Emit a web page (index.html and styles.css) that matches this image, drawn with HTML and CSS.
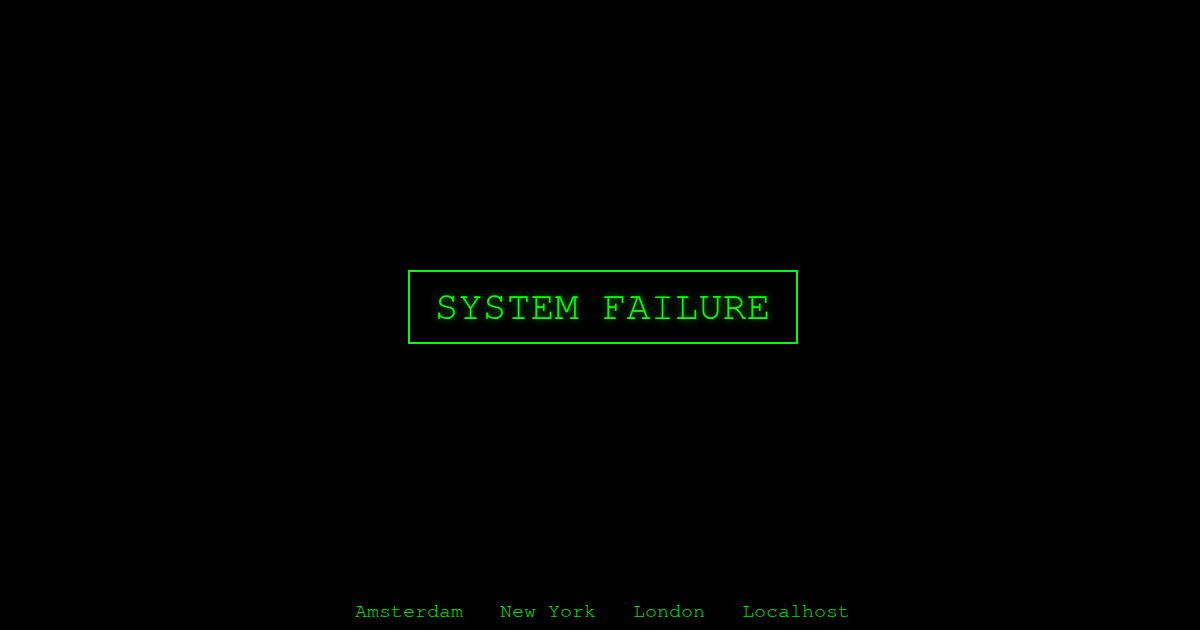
FILE: index.html
```html
<!DOCTYPE html>
<html>
<head>
<meta charset="utf-8">
<link rel="stylesheet" href="styles.css">
</head>
<body>
<main class="stage">
  <div class="failure">SYSTEM FAILURE</div>
</main>
<footer class="nodes">
  <span>Amsterdam</span>
  <span>New York</span>
  <span>London</span>
  <span>Localhost</span>
</footer>
</body>
</html>
```
FILE: styles.css
```css
html, body {
  margin: 0;
  padding: 0;
  background: #000;
  height: 100%;
}
body {
  display: flex;
  flex-direction: column;
  font-family: FreeMono, "TeX Gyre Cursor", "Liberation Mono", monospace;
  color: #00dd00;
}
.stage {
  flex: 1;
  display: flex;
  align-items: center;
  justify-content: center;
  padding-top: 14px;
}
.failure {
  border: 2px solid #00ff00;
  padding: 14px 25px 14px 25px;
  margin-left: 5px;
  font-size: 40px;
  line-height: 42px;
  color: #00ff00;
  text-shadow: 0 0 8px rgba(0, 255, 0, 0.55);
}
.nodes {
  display: flex;
  justify-content: center;
  gap: 37px;
  font-size: 20px;
  line-height: 23px;
  padding: 0 0 7px 5px;
  color: #00e400;
}
```
